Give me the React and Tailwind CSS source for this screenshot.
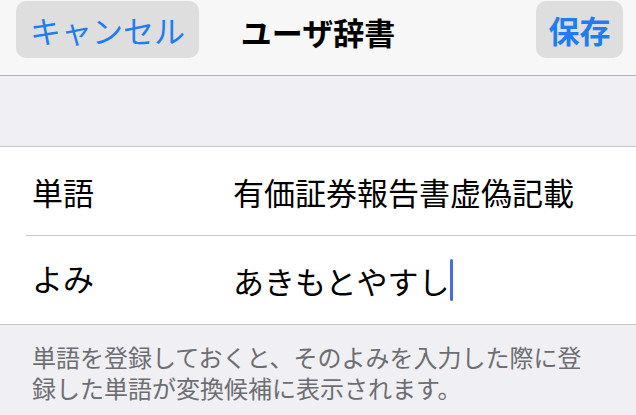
export default function App() {
  return (
    <div className="w-[636px] h-[415px] overflow-hidden bg-[#efeff4] font-['Noto_Sans_CJK_JP',sans-serif]">
      {/* nav bar */}
      <div className="h-[76px] bg-[#f7f7f7] border-b border-[#b2b2b2] grid grid-cols-[1fr_auto_1fr] items-start pt-[1px]">
        <div className="pl-[16px]">
          <button className="h-[57px] px-[14px] rounded-[10px] bg-[#dedede] text-[#1f7df0] text-[31px] leading-none">
            キャンセル
          </button>
        </div>
        <div className="h-[57px] flex items-center text-[31px] font-bold text-black leading-none pt-[4px]">
          ユーザ辞書
        </div>
        <div className="flex justify-end pr-[13px]">
          <button className="h-[57px] w-[87px] rounded-[10px] bg-[#dedede] text-[#1f7df0] text-[31px] font-semibold leading-none">
            保存
          </button>
        </div>
      </div>

      <div className="h-[70px]" />

      {/* form */}
      <div className="bg-white border-y border-[#c8c7cc]">
        <div className="h-[88px] flex items-center text-[31px] leading-none text-black">
          <div className="w-[233px] pl-[32px]">単語</div>
          <div>有価証券報告書虚偽記載</div>
        </div>
        <div className="ml-[26px] h-px bg-[#c8c7cc]" />
        <div className="h-[88px] flex items-center text-[31px] leading-none text-black">
          <div className="w-[233px] pl-[32px] -mt-[6px]">よみ</div>
          <div className="flex items-center">
            <span>あきもとやすし</span>
            <span className="ml-[1px] w-[3px] h-[42px] rounded-full bg-[#4a6ce0]" />
          </div>
        </div>
      </div>

      {/* footer note */}
      <div className="pl-[32px] pt-[16px] text-[24px] leading-[31px] text-[#6d6d72]">
        単語を登録しておくと、そのよみを入力した際に登
        <br />
        録した単語が変換候補に表示されます。
      </div>
    </div>
  );
}
